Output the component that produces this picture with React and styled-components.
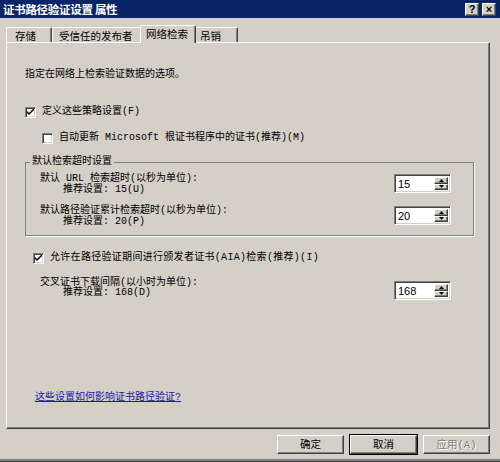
import React from "react";
import styled, { createGlobalStyle } from "styled-components";

const Global = createGlobalStyle`
  html, body { margin: 0; padding: 0; background: #d4d0c8; }
  * { box-sizing: border-box; }
`;

const FONT = `"Liberation Mono", "Noto Sans CJK SC", monospace`;

const Window = styled.div`
  width: 500px;
  height: 462px;
  background: #d4d0c8;
  display: flex;
  flex-direction: column;
  font-family: ${FONT};
  font-size: 10px;
  color: #000;
  box-shadow: inset 0 -1px 0 #404040, inset 0 -3px 0 #808080;
  overflow: hidden;
`;

const TitleBar = styled.div`
  height: 18px;
  background: #0a246a;
  display: flex;
  align-items: center;
  justify-content: space-between;
  padding: 0 4px 0 3px;
`;

const TitleText = styled.span`
  color: #fff;
  font-family: "Noto Sans CJK SC", sans-serif;
  font-weight: 700;
  font-size: 11.5px;
  line-height: 14px;
  letter-spacing: -0.3px;
`;

const TitleButtons = styled.div`
  display: flex;
  gap: 3px;
`;

const TitleButton = styled.div`
  width: 14px;
  height: 13px;
  background: #d4d0c8;
  border-top: 1px solid #fff;
  border-left: 1px solid #fff;
  border-right: 1px solid #404040;
  border-bottom: 1px solid #404040;
  box-shadow: inset -1px -1px 0 #808080;
  display: flex;
  align-items: center;
  justify-content: center;
  font-family: "Liberation Sans", sans-serif;
  font-weight: 700;
  font-size: 11px;
  line-height: 11px;
  color: #000;
`;

const Body = styled.div`
  display: flex;
  flex-direction: column;
  padding: 0 10px 0 6px;
`;

const TabStrip = styled.div`
  display: flex;
  align-items: flex-end;
  height: 17px;
  margin-top: 7px;
`;

const Tab = styled.div`
  position: relative;
  width: ${(p) => p.$w}px;
  height: ${(p) => (p.$active ? 18 : 15)}px;
  margin: ${(p) => (p.$active ? "0 -2px -1px -2px" : "0")};
  z-index: ${(p) => (p.$active ? 2 : 1)};
  padding-left: ${(p) => p.$pl}px;
  background: #d4d0c8;
  border-top: 1px solid #fff;
  border-left: 1px solid #fff;
  border-right: 1px solid #404040;
  box-shadow: inset -1px 0 0 #808080;
  border-radius: 2px 2px 0 0;
  display: flex;
  align-items: ${(p) => (p.$active ? "flex-start" : "center")};
  padding-top: ${(p) => (p.$active ? 1 : 0)}px;
  font-family: "Noto Sans CJK SC", sans-serif;
  font-size: 10.5px;
  line-height: 13px;
  white-space: nowrap;
`;

const Panel = styled.div`
  height: 387px;
  border-top: 1px solid #fff;
  border-left: 1px solid #fff;
  border-right: 1px solid #404040;
  border-bottom: 1px solid #404040;
  box-shadow: inset -1px -1px 0 #808080;
  display: flex;
  flex-direction: column;
  padding: 0 15px 0 18px;
`;

const Text = styled.div`
  height: 12px;
  line-height: 12px;
  white-space: nowrap;
  margin-top: ${(p) => p.$mt || 0}px;
  margin-left: ${(p) => p.$ml || 0}px;
`;

const CheckRow = styled.div`
  display: flex;
  align-items: center;
  gap: 6px;
  height: 12px;
  line-height: 12px;
  white-space: nowrap;
  margin-top: ${(p) => p.$mt || 0}px;
  margin-left: ${(p) => p.$ml || 0}px;
  letter-spacing: ${(p) => p.$ls || 0}px;
`;

const Box = styled.span`
  width: 11px;
  height: 11px;
  flex: none;
  background: #fff;
  border-top: 1px solid #808080;
  border-left: 1px solid #808080;
  border-right: 1px solid #fff;
  border-bottom: 1px solid #fff;
  box-shadow: inset 1px 1px 0 #404040, inset -1px -1px 0 #d4d0c8;
  display: flex;
  align-items: center;
  justify-content: center;
`;

const Group = styled.fieldset`
  margin: 12px 0 0 0;
  padding: 0 22px 8px 4px;
  border: 1px solid #808080;
  box-shadow: 1px 1px 0 #fff;
  min-width: 0;
`;

const Legend = styled.legend`
  padding: 0 2px;
  height: 12px;
  line-height: 12px;
  white-space: nowrap;
`;

const SettingRow = styled.div`
  display: flex;
  justify-content: space-between;
  align-items: flex-start;
  margin-top: ${(p) => p.$mt || 0}px;
  padding-left: ${(p) => p.$pl || 0}px;
  padding-right: ${(p) => p.$pr || 0}px;
`;

const Labels = styled.div`
  display: flex;
  flex-direction: column;
`;

const Line = styled.div`
  height: ${(p) => p.$h || 11}px;
  line-height: 11px;
  white-space: nowrap;
  padding-left: ${(p) => (p.$indent ? 23 : 0)}px;
`;

const Spin = styled.div`
  width: 57px;
  height: 19px;
  margin-top: ${(p) => p.$mt || 0}px;
  background: #fff;
  border-top: 1px solid #808080;
  border-left: 1px solid #808080;
  border-right: 1px solid #fff;
  border-bottom: 1px solid #fff;
  box-shadow: inset 1px 1px 0 #404040, inset -1px -1px 0 #d4d0c8;
  display: flex;
  padding: 2px 2px 2px 2px;
`;

const SpinValue = styled.div`
  flex: 1;
  font-family: "Liberation Sans", sans-serif;
  font-size: 11px;
  line-height: 14px;
  padding-left: 1px;
`;

const SpinButtons = styled.div`
  width: 14px;
  display: flex;
  flex-direction: column;
`;

const SpinBtn = styled.div`
  flex: 1;
  background: #d4d0c8;
  border-top: 1px solid #fff;
  border-left: 1px solid #fff;
  border-right: 1px solid #404040;
  border-bottom: 1px solid #404040;
  box-shadow: inset -1px -1px 0 #808080;
  display: flex;
  align-items: center;
  justify-content: center;
`;

const Link = styled.a`
  display: block;
  color: #1a1aa6;
  text-decoration: underline;
  height: 12px;
  line-height: 12px;
  white-space: nowrap;
  margin-top: 92px;
  margin-left: 10px;
  cursor: pointer;
`;

const ButtonRow = styled.div`
  display: flex;
  justify-content: flex-end;
  gap: 6px;
  margin-top: 6px;
`;

const Button = styled.div`
  width: 67px;
  height: 19px;
  background: #d4d0c8;
  border-top: 1px solid #fff;
  border-left: 1px solid #fff;
  border-right: 1px solid #404040;
  border-bottom: 1px solid #404040;
  box-shadow: inset -1px -1px 0 #808080;
  outline: ${(p) => (p.$default ? "1px solid #000" : "none")};
  display: flex;
  align-items: center;
  justify-content: center;
  font-family: ${FONT};
  font-size: 10.5px;
  line-height: 12px;
  color: ${(p) => (p.$disabled ? "#808080" : "#000")};
  text-shadow: ${(p) => (p.$disabled ? "1px 1px 0 #fff" : "none")};
`;

const Check = () => (
  <svg width="7" height="7" viewBox="0 0 7 7">
    <path d="M0 2 L0 4 L2 6 L7 1 L7 -1 L2 4 Z" fill="#000" />
  </svg>
);

const Arrow = ({ up }) => (
  <svg width="5" height="3" viewBox="0 0 5 3">
    <path d={up ? "M2.5 0 L5 3 L0 3 Z" : "M0 0 L5 0 L2.5 3 Z"} fill="#000" />
  </svg>
);

const SpinBox = ({ value, mt }) => (
  <Spin $mt={mt}>
    <SpinValue>{value}</SpinValue>
    <SpinButtons>
      <SpinBtn>
        <Arrow up />
      </SpinBtn>
      <SpinBtn>
        <Arrow />
      </SpinBtn>
    </SpinButtons>
  </Spin>
);

export default function App() {
  return (
    <>
      <Global />
      <Window>
        <TitleBar>
          <TitleText>证书路径验证设置 属性</TitleText>
          <TitleButtons>
            <TitleButton>?</TitleButton>
            <TitleButton>×</TitleButton>
          </TitleButtons>
        </TitleBar>
        <Body>
          <TabStrip>
            <Tab $w={46} $pl={8}>存储</Tab>
            <Tab $w={90} $pl={6}>受信任的发布者</Tab>
            <Tab $w={56} $pl={5} $active>网络检索</Tab>
            <Tab $w={44} $pl={5}>吊销</Tab>
          </TabStrip>
          <Panel>
            <Text $mt={26}>指定在网络上检索验证数据的选项。</Text>
            <CheckRow $mt={25}>
              <Box>
                <Check />
              </Box>
              定义这些策略设置(F)
            </CheckRow>
            <CheckRow $mt={14} $ml={17}>
              <Box />
              自动更新 Microsoft 根证书程序中的证书(推荐)(M)
            </CheckRow>
            <Group>
              <Legend>默认检索超时设置</Legend>
              <SettingRow $mt={5} $pl={10}>
                <Labels>
                  <Line>默认 URL 检索超时(以秒为单位):</Line>
                  <Line $indent>推荐设置: 15(U)</Line>
                </Labels>
                <SpinBox value="15" mt={1} />
              </SettingRow>
              <SettingRow $mt={10} $pl={10}>
                <Labels>
                  <Line>默认路径验证累计检索超时(以秒为单位):</Line>
                  <Line $indent>推荐设置: 20(P)</Line>
                </Labels>
                <SpinBox value="20" mt={1} />
              </SettingRow>
            </Group>
            <CheckRow $mt={16} $ml={8} $ls={0.3}>
              <Box>
                <Check />
              </Box>
              允许在路径验证期间进行颁发者证书(AIA)检索(推荐)(I)
            </CheckRow>
            <SettingRow $mt={13} $pl={15} $pr={23}>
              <Labels>
                <Line $h={10}>交叉证书下载间隔(以小时为单位):</Line>
                <Line $indent>推荐设置: 168(D)</Line>
              </Labels>
              <SpinBox value="168" mt={4} />
            </SettingRow>
            <Link>这些设置如何影响证书路径验证?</Link>
          </Panel>
          <ButtonRow>
            <Button>确定</Button>
            <Button $default>取消</Button>
            <Button $disabled>应用(A)</Button>
          </ButtonRow>
        </Body>
      </Window>
    </>
  );
}
